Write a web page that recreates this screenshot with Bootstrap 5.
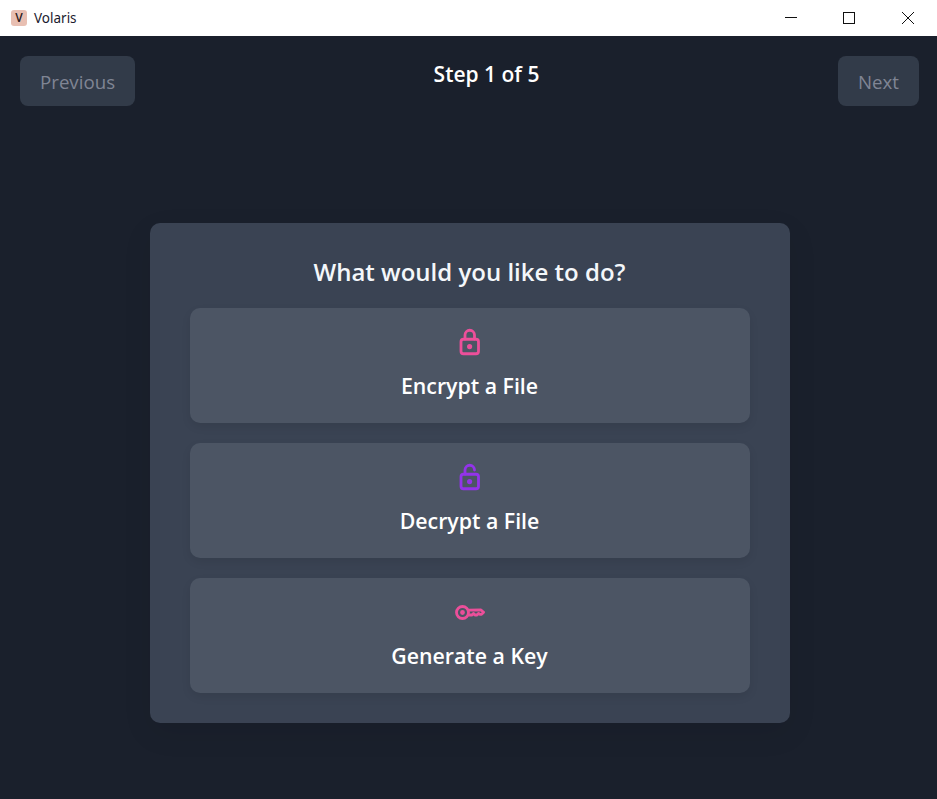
<!DOCTYPE html>
<html lang="en">
<head>
<meta charset="utf-8">
<title>Volaris</title>
<link href="https://cdn.jsdelivr.net/npm/bootstrap@5.3.0/dist/css/bootstrap.min.css" rel="stylesheet">
<style>
html,body{height:100%;overflow:hidden}
body{background:#1a202c;font-family:"Open Sans","Noto Sans",sans-serif}
.win-bar{height:36px;background:#fff;color:#1a1a2e}
.app-logo{width:16px;height:16px;margin-left:11px;background:#e8bfb2;border-radius:3px;font-size:12px;font-weight:600;line-height:16px;color:#2a1a20}
.app-name{margin-left:7px;font-size:13.5px;font-family:"Noto Sans",sans-serif}
.win-ctl{width:58px;height:36px}
.win-close{width:59px}
.stage{width:940px;padding:20px 21px 0 20px}
.step-btn{height:50px;min-width:81px;background:#323b49;border:0;border-radius:8px;color:#808594;font-size:18.7px;padding:2px 20px 0;font-weight:400}
.step-btn:disabled{background:#323b49;color:#808594;opacity:1}
.step-title{color:#fff;font-size:21px;font-weight:600;line-height:37px}
.panel{width:640px;height:500px;margin:117px auto 0;padding:29px 40px 30px;background:#3a4353;border-radius:10px;box-shadow:0 10px 30px rgba(0,0,0,.08)}
.panel-title{color:#f4f7fa;font-size:24px;font-weight:600;line-height:40px;margin:0 0 16px}
.choices{gap:20px}
.choice{height:115px;background:#4c5564;border:0;border-radius:10px;color:#fff;font-size:21.3px;font-weight:600;box-shadow:0 4px 10px rgba(0,0,0,.08);padding:20px 0 0}
.choice:hover{background:#4c5564;color:#fff}
.choice-label{line-height:30px;margin-top:13px}
</style>
</head>
<body>
<div class="win-bar d-flex align-items-center">
  <span class="app-logo text-center">V</span>
  <span class="app-name">Volaris</span>
  <div class="ms-auto d-flex">
    <div class="win-ctl d-flex align-items-center justify-content-center"><svg width="12" height="12" viewBox="0 0 12 12"><path d="M0 5.5H12" stroke="#111" fill="none"/></svg></div>
    <div class="win-ctl d-flex align-items-center justify-content-center"><svg width="12" height="12" viewBox="0 0 12 12"><rect x=".5" y=".5" width="11" height="11" stroke="#111" fill="none"/></svg></div>
    <div class="win-ctl win-close d-flex align-items-center justify-content-center"><svg width="14" height="14" viewBox="0 0 14 14"><path d="M1 1L13 13M13 1L1 13" stroke="#111" fill="none"/></svg></div>
  </div>
</div>
<div class="stage">
  <div class="d-flex justify-content-between align-items-start">
    <button class="btn step-btn" disabled>Previous</button>
    <div class="step-title">Step 1 of 5</div>
    <button class="btn step-btn" disabled>Next</button>
  </div>
  <div class="panel">
    <h2 class="panel-title text-center">What would you like to do?</h2>
    <div class="d-grid choices">
      <button class="btn choice d-flex flex-column align-items-center">
        <svg width="30" height="30" viewBox="0 0 30 30" fill="none" stroke="#ec4f9a" stroke-width="2.8" stroke-linecap="round" stroke-linejoin="round"><rect x="6" y="11.25" width="17.5" height="14.5" rx="2.5"/><circle cx="14.6" cy="18.6" r="1.2" fill="#ec4f9a"/><path d="M10 11V7a4.75 4.75 0 0 1 9.5 0V11"/></svg>
        <span class="choice-label">Encrypt a File</span>
      </button>
      <button class="btn choice d-flex flex-column align-items-center">
        <svg width="30" height="30" viewBox="0 0 30 30" fill="none" stroke="#9333ea" stroke-width="2.8" stroke-linecap="round" stroke-linejoin="round"><rect x="6" y="11.25" width="17.5" height="14.5" rx="2.5"/><circle cx="14.6" cy="18.6" r="1.2" fill="#9333ea"/><path d="M10 11V7a4.75 4.75 0 0 1 9.5 0"/></svg>
        <span class="choice-label">Decrypt a File</span>
      </button>
      <button class="btn choice d-flex flex-column align-items-center">
        <svg width="30" height="30" viewBox="0 0 30 30" fill="none" stroke="#ec4f9a" stroke-width="2.8" stroke-linecap="round" stroke-linejoin="round"><circle cx="7.5" cy="14.5" r="6"/><circle cx="7.5" cy="14.5" r="1" fill="#ec4f9a"/><path d="M13.5 12.2L26 12L28.6 14.2L26.5 16.4H25L23.5 15.4L22 17H20L18.5 15.4L17 17H13.5"/></svg>
        <span class="choice-label">Generate a Key</span>
      </button>
    </div>
  </div>
</div>
</body>
</html>
